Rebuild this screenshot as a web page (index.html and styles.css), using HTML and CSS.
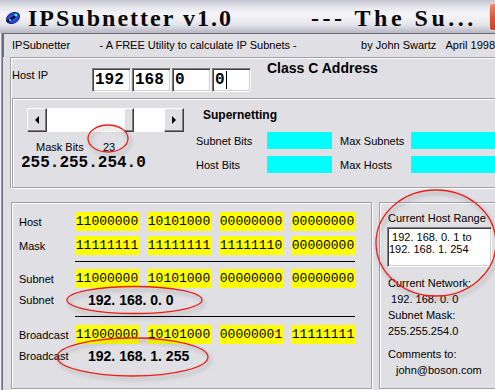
FILE: index.html
```html
<!DOCTYPE html>
<html>
<head>
    <meta charset="UTF-8">
    <title>IPSubnetter v1.0</title>
    <link rel="stylesheet" href="styles.css">
</head>
<body>
    <div class="titlebar">
        <svg class="app-icon" width="16" height="15" viewBox="0 0 16 15">
            <ellipse cx="8" cy="8" rx="7" ry="5" transform="rotate(-30 8 8)" fill="#2b47d6" stroke="#0c1c8a"/>
            <path d="M2 12 L13 4" stroke="#000" stroke-width="2"/>
            <circle cx="11" cy="5" r="1.6" fill="#3ff"/>
            <circle cx="5" cy="10" r="1" fill="#3ff"/>
        </svg>
        <span class="title">IPSubnetter v1.0</span>
        <span class="title title-rest">--- The Su...</span>
        <span class="close-btn"></span>
    </div>

    <div class="frame">
        <div class="infobar">
            <span class="info-name">IPSubnetter</span>
            <span class="info-desc">- A FREE Utility to calculate IP Subnets -</span>
            <span>by John Swartz&nbsp;&nbsp;&nbsp;April 1998</span>
        </div>

        <div class="top-section">
            <div class="host-row">
                <span class="host-label">Host IP</span>
                <div class="octet">192</div>
                <div class="octet">168</div>
                <div class="octet">0</div>
                <div class="octet"><span class="caret">0</span></div>
                <span class="class-label">Class C Address</span>
            </div>

            <div class="super-panel">
                <div class="mask-col">
                    <div class="scrollbar">
                        <div class="sb-btn"><span class="arrow-left"></span></div>
                        <div class="sb-track">
                            <div class="sb-space"></div>
                            <div class="sb-thumb"></div>
                        </div>
                        <div class="sb-btn"><span class="arrow-right"></span></div>
                    </div>
                    <div class="mask-bits">
                        <span class="mask-bits-label">Mask Bits</span>
                        <span>23</span>
                    </div>
                    <div class="mask-value">255.255.254.0</div>
                </div>
                <div class="super-col">
                    <div class="super-title">Supernetting</div>
                    <div class="super-grid">
                        <span>Subnet Bits</span>
                        <span class="cyan"></span>
                        <span class="max-label">Max Subnets</span>
                        <span class="cyan"></span>
                        <span>Host Bits</span>
                        <span class="cyan"></span>
                        <span class="max-label">Max Hosts</span>
                        <span class="cyan"></span>
                    </div>
                </div>
            </div>
        </div>

        <div class="lower">
            <div class="group bits">
                <div class="bit-row">
                    <span class="bit-label">Host</span>
                    <span class="bit">11000000</span>
                    <span class="bit">10101000</span>
                    <span class="bit">00000000</span>
                    <span class="bit">00000000</span>
                </div>
                <div class="bit-row mask-row">
                    <span class="bit-label">Mask</span>
                    <span class="bit">11111111</span>
                    <span class="bit">11111111</span>
                    <span class="bit">11111110</span>
                    <span class="bit">00000000</span>
                </div>
                <div class="rule"></div>
                <div class="bit-row subnet-row">
                    <span class="bit-label">Subnet</span>
                    <span class="bit">11000000</span>
                    <span class="bit">10101000</span>
                    <span class="bit">00000000</span>
                    <span class="bit">00000000</span>
                </div>
                <div class="result-row">
                    <span class="bit-label">Subnet</span>
                    <span class="result">192. 168. 0. 0</span>
                </div>
                <div class="rule rule-2"></div>
                <div class="bit-row broadcast-row">
                    <span class="bit-label">Broadcast</span>
                    <span class="bit">11000000</span>
                    <span class="bit">10101000</span>
                    <span class="bit">00000001</span>
                    <span class="bit">11111111</span>
                </div>
                <div class="result-row">
                    <span class="bit-label">Broadcast</span>
                    <span class="result">192. 168. 1. 255</span>
                </div>
            </div>

            <div class="group info">
                <div>Current Host Range</div>
                <div class="range-box">
                    <div>&nbsp;192. 168. 0. 1 to</div>
                    <div>192. 168. 1. 254</div>
                </div>
                <div class="info-lines">
                    <div>Current Network:</div>
                    <div>&nbsp;192. 168. 0. 0</div>
                    <div>Subnet Mask:</div>
                    <div>255.255.254.0</div>
                    <div class="comments">Comments to:</div>
                    <div class="email">john@boson.com</div>
                </div>
            </div>
        </div>
    </div>

    <svg class="marks" width="495" height="390" viewBox="0 0 495 390">
        <ellipse cx="108" cy="138.5" rx="20" ry="13.5"/>
        <ellipse cx="436" cy="243" rx="60" ry="53"/>
        <ellipse cx="134.5" cy="300" rx="67.5" ry="13.5"/>
        <ellipse cx="132.5" cy="357" rx="75.5" ry="19"/>
    </svg>
</body>
</html>
```

FILE: styles.css
```css
body {
    margin: 0;
    width: 495px;
    height: 390px;
    overflow: hidden;
    position: relative;
    background: #e0dfe3;
    color: #000;
    font-family: "Liberation Sans", Arial, sans-serif;
    font-size: 11px;
}

/* title bar */
.titlebar {
    display: flex;
    align-items: flex-start;
    height: 33px;
    overflow: hidden;
    background: linear-gradient(to bottom, #c6c6d2 0%, #e6e6ee 22%, #f6f6f9 45%, #e4e4eb 75%, #b6b6c4 100%);
}

.app-icon {
    margin: 10px 0 0 5px;
    flex-shrink: 0;
}

.title {
    font-family: "Liberation Serif", "Times New Roman", serif;
    font-weight: bold;
    font-size: 24px;
    line-height: 24px;
    letter-spacing: 2px;
    white-space: pre;
    margin-top: 6px;
    color: #0a0a0a;
}

.title:first-of-type {
    width: 283px;
    margin-left: 7px;
    flex-shrink: 0;
}

.title-rest {
    letter-spacing: 3.5px;
}

.close-btn {
    margin: 3px -16px 0 auto;
    width: 20px;
    height: 26px;
    flex-shrink: 0;
    border: 1px solid #f4d8d0;
    border-radius: 3px;
    background: linear-gradient(to bottom, #ea8a70, #d6583e 50%, #c4442c);
}

/* window body */
.frame {
    padding-left: 3px;
    box-shadow: inset 1px 0 #f0f0f4, inset 2px 0 #9898aa, inset 3px 0 #70708a;
    height: 357px;
}

.infobar {
    display: flex;
    height: 23px;
    line-height: 23px;
    padding-left: 8px;
    border-top: 1px solid #6a6a74;
    border-left: 1px solid #6a6a74;
    white-space: nowrap;
}

.info-name {
    width: 88px;
}

.info-desc {
    width: 263px;
}

.top-section {
    margin-left: 7px;
    border-top: 1px solid #a0a0a6;
    border-left: 1px solid #a0a0a6;
    box-shadow: inset 1px 1px #fff;
}

/* host ip row */
.host-row {
    display: flex;
    align-items: flex-start;
    height: 40px;
}

.host-label {
    width: 80px;
    margin-top: 10px;
    line-height: 14px;
    padding-left: 1px;
}

.octet {
    box-sizing: border-box;
    width: 39px;
    height: 24px;
    margin: 10px 1px 0 0;
    padding-left: 2px;
    background: #fff;
    border: 1px solid;
    border-color: #808080 #fff #fff #808080;
    box-shadow: inset 1px 1px #404040, inset -1px -1px #d4d0c8;
    font-family: "Liberation Mono", "Courier New", monospace;
    font-weight: bold;
    font-size: 16px;
    line-height: 22px;
}

.caret {
    padding-right: 1px;
    border-right: 1px solid #000;
}

.class-label {
    margin: 2px 0 0 15px;
    font-size: 14px;
    font-weight: bold;
    line-height: 16px;
}

/* supernetting */
.super-panel {
    display: flex;
    box-sizing: border-box;
    height: 90px;
    margin-left: 1px;
    border: 1px solid #a0a0a6;
    border-right: none;
    box-shadow: inset 1px 1px #fff, 0 1px #fff;
}

.mask-col {
    width: 183px;
    flex-shrink: 0;
}

.super-col {
    flex-shrink: 0;
}

.scrollbar {
    display: flex;
    width: 157px;
    height: 24px;
    margin: 9px 0 0 14px;
}

.sb-btn,
.sb-thumb {
    box-sizing: border-box;
    display: flex;
    align-items: center;
    justify-content: center;
    background: #e0dfe3;
    border: 1px solid;
    border-color: #fff #404040 #404040 #fff;
    box-shadow: inset -1px -1px #808080;
}

.sb-btn {
    width: 20px;
}

.sb-track {
    display: flex;
    flex: 1;
    background: #fff;
}

.sb-space {
    width: 77px;
}

.sb-thumb {
    width: 10px;
}

.arrow-left,
.arrow-right {
    width: 0;
    height: 0;
    border-top: 4px solid transparent;
    border-bottom: 4px solid transparent;
}

.arrow-left {
    border-right: 4px solid #000;
}

.arrow-right {
    border-left: 4px solid #000;
}

.mask-bits {
    display: flex;
    margin-top: 8px;
    padding-left: 23px;
    line-height: 14px;
}

.mask-bits-label {
    width: 67px;
}

.mask-value {
    margin-top: 1px;
    padding-left: 8px;
    font-family: "Liberation Mono", "Courier New", monospace;
    font-weight: bold;
    font-size: 16px;
    line-height: 16px;
}

.super-title {
    margin-top: 9px;
    padding-left: 7px;
    font-size: 12px;
    font-weight: bold;
    line-height: 14px;
}

.super-grid {
    display: grid;
    grid-template-columns: 71px 65px 79px 90px;
    grid-auto-rows: 17px;
    row-gap: 7px;
    align-items: center;
    margin-top: 10px;
}

.max-label {
    padding-left: 8px;
}

.cyan {
    height: 17px;
    background: #00ffff;
}

/* lower groups */
.lower {
    display: flex;
    margin: 14px 0 0 8px;
}

.group {
    box-sizing: border-box;
    height: 187px;
    border: 1px solid #a0a0a6;
    box-shadow: inset 1px 1px #fff, 1px 1px #fff;
}

.bits {
    width: 361px;
    flex-shrink: 0;
    padding: 9px 0 0 7px;
}

.bit-row {
    display: flex;
    align-items: center;
    height: 19px;
}

.bit-label {
    width: 56px;
    flex-shrink: 0;
}

.bit {
    width: 64px;
    height: 19px;
    margin-right: 8px;
    background: #ffff00;
    text-align: center;
    font-family: "Liberation Mono", "Courier New", monospace;
    font-size: 13px;
    line-height: 19px;
}

.mask-row {
    margin-top: 5px;
}

.rule {
    width: 280px;
    height: 1px;
    margin: 6px 0 0 56px;
    background: #000;
}

.subnet-row {
    margin-top: 7px;
}

.result-row {
    display: flex;
    align-items: center;
    height: 24px;
}

.result {
    padding-left: 13px;
    font-size: 14px;
    font-weight: bold;
}

.rule-2 {
    margin-top: 4px;
}

.broadcast-row {
    margin-top: 8px;
}

.info {
    width: 130px;
    flex-shrink: 0;
    margin-left: 7px;
    padding: 8px 0 0 8px;
    line-height: 15px;
}

.range-box {
    box-sizing: border-box;
    width: 105px;
    height: 40px;
    margin: 1px 0 0 -1px;
    padding: 3px 0 0 1px;
    background: #fff;
    border: 1px solid;
    border-color: #808080 #fff #fff #808080;
    box-shadow: inset 1px 1px #404040, inset -1px -1px #d4d0c8;
    line-height: 12px;
}

.info-lines {
    margin-top: 8px;
    line-height: 16px;
}

.comments {
    margin-top: 7px;
}

.email {
    padding-left: 8px;
}

/* red annotation rings */
.marks {
    position: absolute;
    top: 0;
    left: 0;
    pointer-events: none;
    filter: drop-shadow(2px 3px 2px rgba(0, 0, 0, 0.3));
}

.marks ellipse {
    fill: none;
    stroke: #e8201c;
    stroke-width: 1.3;
}
```
